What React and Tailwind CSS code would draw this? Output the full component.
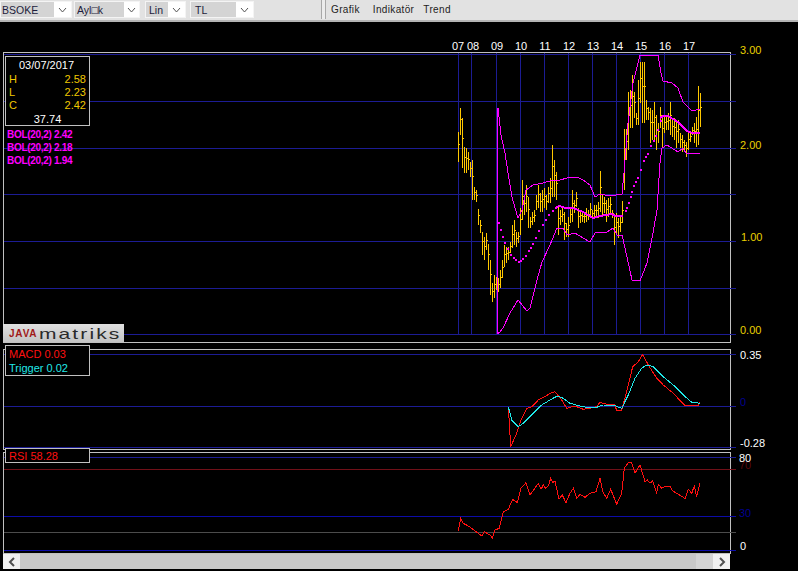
import React from "react";

const font = { fontFamily: '"Liberation Sans", Arial, sans-serif' };
const bars = [
[458,132,162],[460,108,135],[462,118,168],[464,147,173],[466,148,173],[468,152,170],[470,162,177],[472,160,200],[474,187,200],[476,190,202],[478,209,225],[480,220,233],[482,232,255],[484,237,260],[486,233,250],[488,244,270],[490,260,295],[492,283,302],[494,275,298],[496,277,290],[498,278,292],[500,270,288],[502,260,278],[504,245,267],[506,247,263],[508,247,260],[510,242,253],[512,225,248],[514,220,245],[516,232,247],[518,232,243],[520,208,235],[522,180,220],[524,195,215],[526,185,212],[528,197,228],[530,217,228],[532,212,225],[534,210,222],[536,195,210],[538,185,208],[540,193,212],[542,190,212],[544,188,208],[546,195,210],[548,187,203],[550,178,203],[552,145,197],[554,160,197],[556,172,200],[558,207,235],[560,210,225],[562,208,222],[564,212,240],[566,223,237],[568,217,237],[570,208,223],[572,190,222],[574,200,213],[576,192,207],[578,208,228],[580,210,223],[582,212,222],[584,212,223],[586,208,222],[588,210,220],[590,203,218],[592,210,218],[594,205,217],[596,205,218],[598,202,218],[600,171,212],[602,195,215],[604,197,213],[606,200,222],[608,198,217],[610,197,215],[612,210,218],[614,215,245],[616,213,235],[618,218,238],[620,215,232],[622,201,223],[624,129,190],[626,129,160],[628,92,150],[630,90,128],[632,75,128],[634,92,118],[636,113,125],[638,80,125],[640,62,103],[642,62,123],[644,62,123],[646,100,120],[648,107,120],[650,108,143],[652,110,140],[654,102,140],[656,115,150],[658,123,143],[660,107,128],[662,115,147],[664,115,133],[666,115,130],[668,113,130],[670,102,135],[672,118,137],[674,118,140],[676,120,148],[678,120,143],[680,133,148],[682,135,152],[684,140,152],[686,142,157],[688,132,150],[690,132,142],[692,127,135],[694,123,143],[696,117,147],[698,86,145],[700,93,127]];
const upper = "497,334 497,108 498,108 501,135 505,153 508,173 512,197 518,218 522,210 526,190 533,185 543,183 553,180 560,180 567,178 577,177 583,180 590,185 595,197 600,194 610,196 622,194 624,173 628,123 633,83 640,55 658,55 661,73 663,81 672,83 678,88 683,102 692,111 700,109";
const lower = "497,334 500,332 503,328 510,313 518,300 527,311 530,308 537,280 542,262 550,245 557,228 563,228 567,235 575,233 583,238 590,242 595,233 600,232 607,232 613,228 617,235 622,235 625,248 632,280 640,281 647,263 653,233 657,210 660,163 662,148 667,145 678,152 683,148 686,153 695,153 700,154";
const dots = [[498,222],[500,229],[502,236],[504,242],[507,248],[510,254],[513,257],[515,259],[518,261],[520,260],[522,258],[525,255],[528,250],[530,247],[532,243],[535,237],[538,230],[542,224],[545,219],[548,214],[552,210],[555,207],[625,210],[626,207],[628,202],[630,196],[631,191],[633,185],[635,181],[637,177],[640,169],[643,160],[645,156],[647,153],[650,145],[653,140],[655,135],[657,129],[660,120]];
const mid1 = "556,207 560,206 565,208 573,208 583,212 593,218 600,216 612,214 615,216 623,216";
const mid2 = "660,118 663,116 668,116 678,122 687,131 692,133 700,133";
const toPts = (a, ox, oy) => a.map(([x, y]) => `${(ox + x / 3).toFixed(1)},${(oy + y / 3).toFixed(1)}`).join(" ");
const macdRed = toPts([[25,185],[32,305],[50,265],[65,220],[80,190],[95,185],[115,165],[135,155],[150,145],[165,140],[185,165],[200,190],[215,185],[230,185],[250,193],[270,190],[290,185],[300,172],[320,178],[345,180],[350,197],[365,195],[380,140],[398,65],[415,50],[428,28],[445,60],[470,100],[490,120],[520,145],[555,182],[575,180],[595,182],[600,170]], 500, 345);
const macdCyan = toPts([[25,185],[35,225],[55,245],[70,235],[100,205],[125,180],[150,165],[172,153],[190,160],[210,175],[240,183],[260,187],[290,187],[310,180],[345,182],[365,190],[385,150],[405,100],[425,70],[440,60],[460,65],[490,95],[520,120],[550,150],[575,172],[600,175]], 500, 345);
const rsi = toPts([[55,242],[62,205],[70,220],[85,228],[95,235],[105,243],[125,258],[133,245],[150,255],[157,263],[165,240],[178,235],[190,185],[205,178],[218,148],[232,158],[243,115],[258,98],[270,135],[295,100],[303,118],[310,105],[315,115],[325,108],[332,85],[338,98],[345,93],[357,148],[367,135],[378,158],[390,130],[400,115],[410,145],[420,133],[435,142],[450,130],[468,125],[480,85],[488,125],[500,145],[512,118],[530,163],[545,130],[553,55],[565,38],[575,38],[585,70],[600,45],[615,95],[622,90],[630,100],[638,92],[650,128],[655,103],[665,115],[675,110],[690,108],[697,122],[730,142],[735,148],[745,118],[755,130],[763,108],[770,140],[780,100]], 440, 450);
const verticals = [459, 472, 497, 521, 545, 569, 593, 617, 641, 665, 689];
const dates = [["07",458],["08",473],["09",497],["10",521],["11",545],["12",569],["13",593],["14",617],["15",641],["16",665],["17",689]];
const BLUE = "#1c1c94";

function Select({ label, gray, total, pad, className = "" }) {
  return (
    <div className={`flex h-[17px] items-stretch bg-white border border-[#f4f4f4] ${className}`} style={{ width: total }}>
      <div className="bg-[#d4d4d4] text-[#1c1c3c] text-[10.5px] leading-[16px]" style={{ width: gray, paddingLeft: pad }}>{label}</div>
      <div className="flex-1 flex items-center justify-center">
        <svg width="9" height="6" viewBox="0 0 9 6"><path d="M1 1l3.5 4L8 1" fill="none" stroke="#555" strokeWidth="1" /></svg>
      </div>
    </div>
  );
}

function Axis({ text, y, x = 740, color }) {
  return <span className="absolute text-[11px] leading-[12px] whitespace-nowrap" style={{ left: x, top: y, color }}>{text}</span>;
}

export default function App() {
  return (
    <div className="w-[798px] h-[571px] bg-black overflow-hidden flex flex-col" style={font}>
      <div className="h-[22px] shrink-0 bg-[#e2e2e2] border-b-2 border-[#b4b4b4] flex items-start pt-[1px]">
        <Select label="BSOKE" gray={53} pad={1} total={72} />
        <Select label="Ayl□k" gray={49} pad={2} total={66} className="ml-[2px]" />
        <Select label="Lin" gray={22} pad={3} total={41} className="ml-[5px]" />
        <Select label="TL" gray={45} pad={4} total={64} className="ml-[4px]" />
        <div className="ml-[67px] h-[19px] w-[5px] -mt-[1px] border-x border-[#a8a8a8] bg-[#ececec]" />
        <div className="ml-[5px] flex text-[10px] leading-[18px] tracking-[0.35px] text-[#222]">
          <span>Grafik</span>
          <span className="ml-[13px]">Indikatör</span>
          <span className="ml-[9px]">Trend</span>
        </div>
      </div>

      <div className="h-[30px] shrink-0 relative">
        {dates.map(([d, x]) => (
          <span key={d} className="absolute top-[18px] w-[20px] text-center text-[11px] leading-[12px] text-white" style={{ left: x - 10 }}>{d}</span>
        ))}
      </div>

      <div className="h-[292px] shrink-0 relative">
        <svg className="block w-[798px] h-[292px]" viewBox="0 52 798 292" shapeRendering="crispEdges">
          <path d="M3.5 343V52.5H730.5V342.5H3" fill="none" stroke="#c0c0c0" />
          {[54, 101, 148, 194, 241, 288, 334].map(y => <line key={y} x1="4" x2="736" y1={y + 0.5} y2={y + 0.5} stroke={BLUE} />)}
          {verticals.map(x => <line key={x} x1={x - 0.5} x2={x - 0.5} y1="53" y2="335" stroke={BLUE} />)}
          {bars.map(([x, hi, lo]) => (
            <g key={x} stroke="#ffc800">
              <line x1={x + 0.5} x2={x + 0.5} y1={hi} y2={lo} />
              <line x1={x + 0.5} x2={x + 2} y1={Math.round(hi + (lo - hi) * 0.4) + 0.5} y2={Math.round(hi + (lo - hi) * 0.4) + 0.5} />
            </g>
          ))}
          <polyline points={upper} fill="none" stroke="#ff00ff" />
          <polyline points={lower} fill="none" stroke="#ff00ff" />
          <polyline points={mid1} fill="none" stroke="#ff00ff" strokeWidth="2" />
          <polyline points={mid2} fill="none" stroke="#ff00ff" strokeWidth="2" />
          {dots.map(([x, y]) => <rect key={x} x={x} y={y} width="2" height="2" fill="#ff00ff" />)}
        </svg>
        <div className="absolute left-[5px] top-[4px] w-[85px] h-[70px] bg-black border border-[#c0c0c0] text-[11px] leading-[13px] px-[3px] pt-[2px]">
          <div className="text-center text-white pb-[1px] -translate-x-[1px]">03/07/2017</div>
          {[["H","2.58"],["L","2.23"],["C","2.42"]].map(([k,v]) => (
            <div key={k} className="flex justify-between text-[#f0c800]"><span>{k}</span><span>{v}</span></div>
          ))}
          <div className="text-center text-white pt-[1px]">37.74</div>
        </div>
        <div className="absolute left-[7px] top-[76px] text-[10px] leading-[13px] font-bold tracking-[-0.3px] text-[#ff00ff]">
          <div>BOL(20,2) 2.42</div>
          <div>BOL(20,2) 2.18</div>
          <div>BOL(20,2) 1.94</div>
        </div>
        <div className="absolute left-[3px] top-[272px] w-[121px] h-[18px] bg-gradient-to-b from-[#e0e0e0] to-[#c4c4c4] flex items-center pl-[6px] overflow-hidden">
          <span className="text-[10px] font-bold text-[#a01818] tracking-[0.8px] pr-[2px]">JAVA</span>
          <span className="text-[15px] leading-none text-[#2a2a2a] tracking-[1.5px] scale-x-[1.4] origin-left">matriks</span>
        </div>
        <Axis text="3.00" y={-8} color="#e8d000" />
        <Axis text="2.00" y={87} color="#e8d000" />
        <Axis text="1.00" y={179} x={741} color="#e8d000" />
        <Axis text="0.00" y={272} color="#e8d000" />
      </div>

      <div className="h-[5px] shrink-0" />

      <div className="h-[102px] shrink-0 relative">
        <svg className="block w-[798px] h-[102px]" viewBox="0 349 798 102" shapeRendering="crispEdges">
          <path d="M3.5 450V349.5H730.5V449.5H3" fill="none" stroke="#c0c0c0" />
          {[354, 406, 447].map(y => <line key={y} x1="4" x2="736" y1={y + 0.5} y2={y + 0.5} stroke={BLUE} />)}
          <polyline points={macdRed} fill="none" stroke="#ff1010" />
          <polyline points={macdCyan} fill="none" stroke="#20e8e8" />
        </svg>
        <div className="absolute left-[5px] -top-[4px] w-[85px] h-[31px] bg-black border border-[#c0c0c0] text-[11px] leading-[14px] px-[3px] pt-[1px]">
          <div className="text-[#ff1010]">MACD 0.03</div>
          <div className="text-[#20e8e8]">Trigger 0.02</div>
        </div>
        <Axis text="0.35" y={0} color="#ffffff" />
        <Axis text="0" y={47} color="#000090" />
        <Axis text="-0.28" y={88} color="#ffffff" />
      </div>

      <div className="h-[1px] shrink-0" />

      <div className="h-[102px] shrink-0 relative">
        <svg className="block w-[798px] h-[102px]" viewBox="0 452 798 102" shapeRendering="crispEdges">
          <path d="M3.5 554V452.5H730.5V553.5H3" fill="none" stroke="#c0c0c0" />
          <line x1="4" x2="736" y1="457.5" y2="457.5" stroke={BLUE} />
          <line x1="4" x2="736" y1="469.5" y2="469.5" stroke="#701018" />
          <line x1="4" x2="736" y1="516.5" y2="516.5" stroke="#0c0ca8" />
          <line x1="4" x2="736" y1="532.5" y2="532.5" stroke="#4c4c4c" />
          <line x1="4" x2="736" y1="550.5" y2="550.5" stroke="#0c0ca8" />
          <polyline points={rsi} fill="none" stroke="#ff1010" />
        </svg>
        <div className="absolute left-[5px] -top-[4px] w-[85px] h-[15px] bg-black border border-[#c0c0c0] text-[11px] leading-[15px] px-[3px] text-[#ff1010]">RSI 58.28</div>
        <Axis text="70" y={7} x={739} color="#5a0808" />
        <Axis text="80" y={0} x={739} color="#ffffff" />
        <Axis text="30" y={55} x={739} color="#000090" />
        <Axis text="0" y={88} color="#ffffff" />
      </div>

      <div className="ml-[3px] w-[727px] h-[15px] shrink-0 bg-[#c8c8c8] flex items-stretch justify-between">
        <div className="w-[17px] bg-[#f0f0f0] flex items-center justify-center">
          <svg width="8" height="10" viewBox="0 0 8 10"><path d="M6 1L2 5l4 4" fill="none" stroke="#505050" strokeWidth="2" /></svg>
        </div>
        <div className="flex">
          <div className="w-[17px] bg-[#d4d4d4]" />
          <div className="w-[17px] bg-[#f0f0f0] flex items-center justify-center">
            <svg width="8" height="10" viewBox="0 0 8 10"><path d="M2 1l4 4-4 4" fill="none" stroke="#505050" strokeWidth="2" /></svg>
          </div>
        </div>
      </div>
    </div>
  );
}
